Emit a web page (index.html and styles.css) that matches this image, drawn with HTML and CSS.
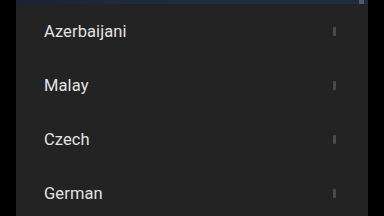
FILE: index.html
```html
<!DOCTYPE html>
<html lang="en">
<head>
    <meta charset="UTF-8">
    <meta name="viewport" content="width=device-width, initial-scale=1.0">
    <title>Languages</title>
    <link rel="stylesheet" href="styles.css">
</head>
<body>
    <div class="panel">
        <div class="top-bar"><span class="top-knob"></span></div>
        <ul class="lang-list">
            <li class="lang-item"><span class="lang-name">Azerbaijani</span><span class="handle"></span></li>
            <li class="lang-item"><span class="lang-name">Malay</span><span class="handle"></span></li>
            <li class="lang-item"><span class="lang-name">Czech</span><span class="handle"></span></li>
            <li class="lang-item"><span class="lang-name">German</span><span class="handle"></span></li>
        </ul>
    </div>
</body>
</html>
```

FILE: styles.css
```css
* { box-sizing: border-box; margin: 0; padding: 0; }

html, body { height: 100%; overflow: hidden; }

body {
    background: #000;
    font-family: Roboto, 'Noto Sans', sans-serif;
    color: #e2e2e2;
}

.panel {
    width: 352px;
    height: 216px;
    margin-left: 16px;
    background: #232323;
}

.top-bar {
    height: 4px;
    background: linear-gradient(90deg, #1b2233, #1e2a40 30%, #1f2b42);
    display: flex;
    justify-content: flex-end;
    padding-right: 4px;
}
.top-knob {
    width: 5px;
    height: 4px;
    background: #555a63;
}

.lang-list { list-style: none; }

.lang-item {
    height: 54px;
    display: flex;
    align-items: center;
    justify-content: space-between;
    padding: 0 32px 0 28px;
}

.lang-name { font-size: 16.5px; letter-spacing: 0.1px; }

.handle {
    width: 3px;
    height: 9px;
    border-radius: 1px;
    background: #4a4a4a;
}
```
